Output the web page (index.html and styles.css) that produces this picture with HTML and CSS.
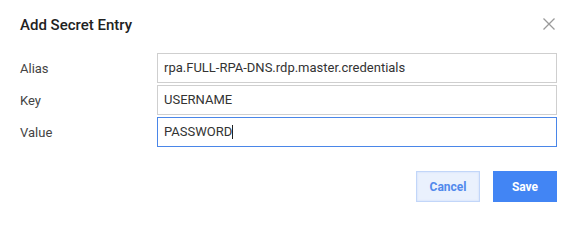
FILE: index.html
```html
<!DOCTYPE html>
<html>
<head>
<meta charset="utf-8">
<link rel="stylesheet" href="styles.css">
</head>
<body>
<div class="dialog">
  <div class="header">
    <div class="title">Add Secret Entry</div>
    <button class="close" aria-label="Close">
      <svg width="12" height="12" viewBox="0 0 12 12"><path d="M0.5 0.5L11.5 11.5M11.5 0.5L0.5 11.5" stroke="#9a9a9a" stroke-width="1.3" fill="none"/></svg>
    </button>
  </div>
  <div class="form">
    <label class="label">Alias</label>
    <div class="input">rpa.FULL-RPA-DNS.rdp.master.credentials</div>
    <label class="label">Key</label>
    <div class="input">USERNAME</div>
    <label class="label">Value</label>
    <div class="input focused">PASSWORD<span class="caret"></span></div>
  </div>
  <div class="actions">
    <button class="btn cancel">Cancel</button>
    <button class="btn save">Save</button>
  </div>
</div>
</body>
</html>
```

FILE: styles.css
```css
html, body {
  margin: 0;
  padding: 0;
  background: #fff;
}
.dialog {
  width: 577px;
  height: 240px;
  box-sizing: border-box;
  padding: 16px 20px 0 20px;
  font-family: Roboto, "Liberation Sans", sans-serif;
}
.header {
  display: flex;
  justify-content: space-between;
  align-items: flex-start;
  height: 37px;
}
.title {
  font-size: 15px;
  font-weight: 500;
  color: #222;
  line-height: 18px;
}
.close {
  border: none;
  background: none;
  padding: 0;
  margin: 2px 2px 0 0;
  width: 12px;
  height: 12px;
  display: block;
}
.close svg { display: block; }
.form {
  display: grid;
  grid-template-columns: 137px 1fr;
  row-gap: 2px;
  align-items: center;
}
.label {
  font-size: 13px;
  color: #444;
}
.input {
  height: 30px;
  box-sizing: border-box;
  border: 1px solid #cfcfcf;
  padding: 0 6px;
  font-size: 13px;
  color: #333;
  line-height: 28px;
  display: flex;
  align-items: center;
}
.input.focused {
  border-color: #4a86e8;
}
.caret {
  display: inline-block;
  width: 1px;
  height: 14px;
  background: #222;
}
.actions {
  display: flex;
  justify-content: flex-end;
  gap: 13px;
  margin-top: 24px;
}
.btn {
  width: 64px;
  height: 31px;
  font-family: Roboto, "Liberation Sans", sans-serif;
  font-size: 12px;
  font-weight: 700;
  border: none;
  padding: 0;
}
.cancel {
  background: #eaf1fd;
  color: #5189ec;
  border: 1px solid #c2d6f9;
  box-shadow: inset 0 0 2px #c6d9fb;
}
.save {
  background: #4285f4;
  color: #fff;
}
```
